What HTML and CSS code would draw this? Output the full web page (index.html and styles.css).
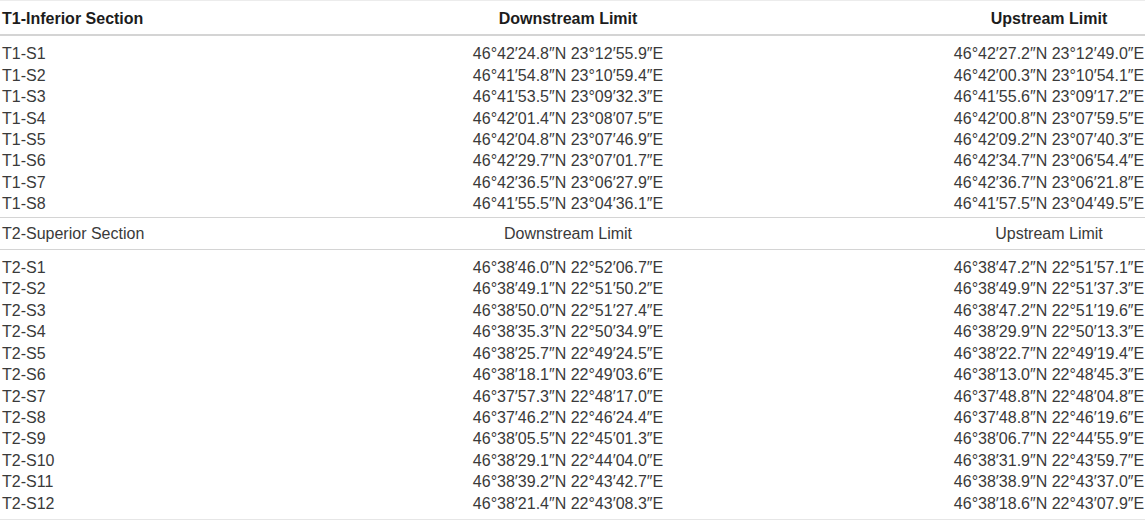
FILE: index.html
```html
<!DOCTYPE html>
<html>
<head>
<meta charset="utf-8">
<link rel="stylesheet" href="styles.css">
</head>
<body>
<table class="coords">
  <colgroup>
    <col class="c1"><col class="c2"><col class="c3">
  </colgroup>
  <thead>
    <tr class="head">
      <th class="name">T1-Inferior Section</th>
      <th>Downstream Limit</th>
      <th>Upstream Limit</th>
    </tr>
  </thead>
  <tbody class="group">
    <tr class="first"><td class="name">T1-S1</td><td>46°42′24.8″N 23°12′55.9″E</td><td>46°42′27.2″N 23°12′49.0″E</td></tr>
    <tr><td class="name">T1-S2</td><td>46°41′54.8″N 23°10′59.4″E</td><td>46°42′00.3″N 23°10′54.1″E</td></tr>
    <tr><td class="name">T1-S3</td><td>46°41′53.5″N 23°09′32.3″E</td><td>46°41′55.6″N 23°09′17.2″E</td></tr>
    <tr><td class="name">T1-S4</td><td>46°42′01.4″N 23°08′07.5″E</td><td>46°42′00.8″N 23°07′59.5″E</td></tr>
    <tr><td class="name">T1-S5</td><td>46°42′04.8″N 23°07′46.9″E</td><td>46°42′09.2″N 23°07′40.3″E</td></tr>
    <tr><td class="name">T1-S6</td><td>46°42′29.7″N 23°07′01.7″E</td><td>46°42′34.7″N 23°06′54.4″E</td></tr>
    <tr><td class="name">T1-S7</td><td>46°42′36.5″N 23°06′27.9″E</td><td>46°42′36.7″N 23°06′21.8″E</td></tr>
    <tr class="last"><td class="name">T1-S8</td><td>46°41′55.5″N 23°04′36.1″E</td><td>46°41′57.5″N 23°04′49.5″E</td></tr>
  </tbody>
  <tbody class="group final">
    <tr class="subhead"><td class="name">T2-Superior Section</td><td>Downstream Limit</td><td>Upstream Limit</td></tr>
    <tr class="first"><td class="name">T2-S1</td><td>46°38′46.0″N 22°52′06.7″E</td><td>46°38′47.2″N 22°51′57.1″E</td></tr>
    <tr><td class="name">T2-S2</td><td>46°38′49.1″N 22°51′50.2″E</td><td>46°38′49.9″N 22°51′37.3″E</td></tr>
    <tr><td class="name">T2-S3</td><td>46°38′50.0″N 22°51′27.4″E</td><td>46°38′47.2″N 22°51′19.6″E</td></tr>
    <tr><td class="name">T2-S4</td><td>46°38′35.3″N 22°50′34.9″E</td><td>46°38′29.9″N 22°50′13.3″E</td></tr>
    <tr><td class="name">T2-S5</td><td>46°38′25.7″N 22°49′24.5″E</td><td>46°38′22.7″N 22°49′19.4″E</td></tr>
    <tr><td class="name">T2-S6</td><td>46°38′18.1″N 22°49′03.6″E</td><td>46°38′13.0″N 22°48′45.3″E</td></tr>
    <tr><td class="name">T2-S7</td><td>46°37′57.3″N 22°48′17.0″E</td><td>46°37′48.8″N 22°48′04.8″E</td></tr>
    <tr><td class="name">T2-S8</td><td>46°37′46.2″N 22°46′24.4″E</td><td>46°37′48.8″N 22°46′19.6″E</td></tr>
    <tr><td class="name">T2-S9</td><td>46°38′05.5″N 22°45′01.3″E</td><td>46°38′06.7″N 22°44′55.9″E</td></tr>
    <tr><td class="name">T2-S10</td><td>46°38′29.1″N 22°44′04.0″E</td><td>46°38′31.9″N 22°43′59.7″E</td></tr>
    <tr><td class="name">T2-S11</td><td>46°38′39.2″N 22°43′42.7″E</td><td>46°38′38.9″N 22°43′37.0″E</td></tr>
    <tr class="last"><td class="name">T2-S12</td><td>46°38′21.4″N 22°43′08.3″E</td><td>46°38′18.6″N 22°43′07.9″E</td></tr>
  </tbody>
</table>
</body>
</html>
```

FILE: styles.css
```css
html, body {
  margin: 0;
  padding: 0;
  background: #ffffff;
}
.coords {
  width: 1145px;
  border-collapse: collapse;
  table-layout: fixed;
  font-family: "Liberation Sans", Arial, sans-serif;
  font-size: 16px;
  line-height: 21.4px;
  color: #3a3a3a;
  border-top: 1px solid #ececec;
}
.c1 { width: 183px; }
.c2 { width: 770px; }
.c3 { width: 192px; }
.coords th,
.coords td {
  padding: 0;
  text-align: center;
  white-space: nowrap;
}
.coords .name {
  text-align: left;
  padding-left: 2px;
}
.head th {
  font-weight: bold;
  color: #1c1c1c;
  padding-top: 7px;
  padding-bottom: 5px;
  border-bottom: 2px solid #d4d4d4;
}
.coords tr.first td {
  padding-top: 7px;
}
.coords tr.last td {
  padding-bottom: 2px;
}
.coords .final tr.last td {
  padding-bottom: 5px;
}
.group {
  border-bottom: 1px solid #d4d4d4;
}
.group.final {
  border-bottom-color: #e6e6e6;
}
.subhead td {
  padding-top: 5px;
  padding-bottom: 5px;
  border-bottom: 1px solid #d4d4d4;
}
```
